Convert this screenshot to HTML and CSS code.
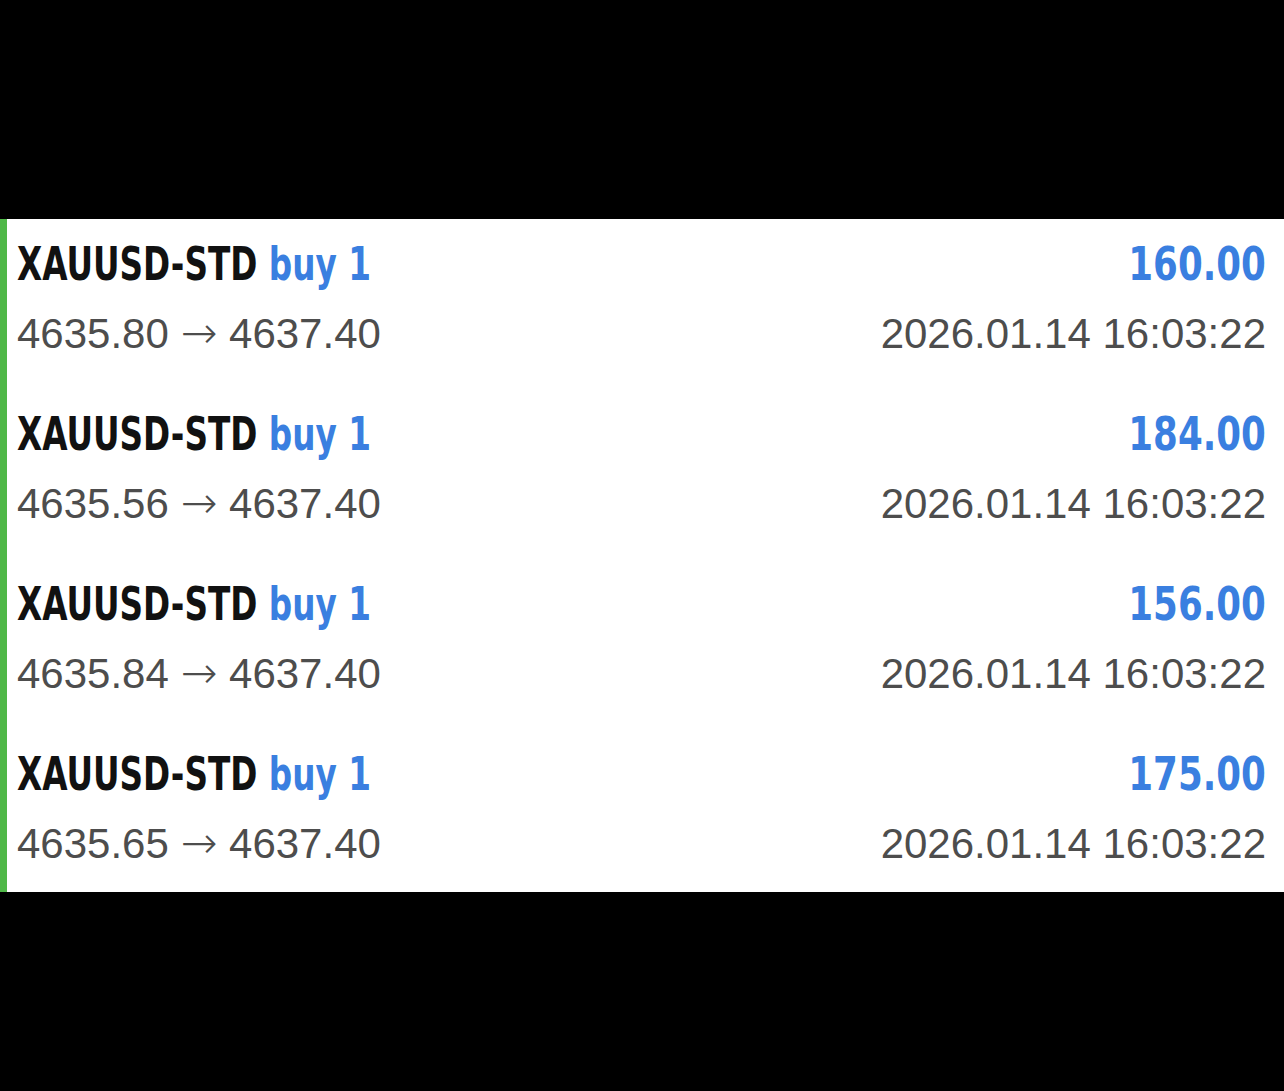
FILE: index.html
```html
<!DOCTYPE html>
<html>
	<head>
		<meta charset="utf-8">
		<title>Closed trades</title>
		<link rel="stylesheet" href="styles.css">
	</head>
	<body>
		<div class="list">
			<div class="row">
				<div class="line">
					<span class="sym">XAUUSD-STD <span class="side">buy 1</span></span>
					<span class="profit">160.00</span>
				</div>
				<div class="line sub">
					<span>4635.80 <span class="arrow">→</span> 4637.40</span>
					<span>2026.01.14 16:03:22</span>
				</div>
			</div>
			<div class="row">
				<div class="line">
					<span class="sym">XAUUSD-STD <span class="side">buy 1</span></span>
					<span class="profit">184.00</span>
				</div>
				<div class="line sub">
					<span>4635.56 <span class="arrow">→</span> 4637.40</span>
					<span>2026.01.14 16:03:22</span>
				</div>
			</div>
			<div class="row">
				<div class="line">
					<span class="sym">XAUUSD-STD <span class="side">buy 1</span></span>
					<span class="profit">156.00</span>
				</div>
				<div class="line sub">
					<span>4635.84 <span class="arrow">→</span> 4637.40</span>
					<span>2026.01.14 16:03:22</span>
				</div>
			</div>
			<div class="row">
				<div class="line">
					<span class="sym">XAUUSD-STD <span class="side">buy 1</span></span>
					<span class="profit">175.00</span>
				</div>
				<div class="line sub">
					<span>4635.65 <span class="arrow">→</span> 4637.40</span>
					<span>2026.01.14 16:03:22</span>
				</div>
			</div>
		</div>
	</body>
</html>
```

FILE: styles.css
```css
body, html{
	background-color: #000;
	margin: 0;
}
.list{
	margin-top: 219px;
	height: 673px;
	background-color: #fff;
	border-left: 7px solid #4fb848;
	box-sizing: border-box;
	padding: 12px 18px 0 10px;
}
.row{
	height: 170px;
}
.line{
	display: flex;
	justify-content: space-between;
	align-items: baseline;
}
.sym, .profit{
	display: inline-block;
	font-family: "DejaVu Sans Condensed", "DejaVu Sans", sans-serif;
	font-stretch: condensed;
	font-weight: 700;
	font-size: 46px;
	line-height: 66px;
}
.sym{
	color: #111;
	transform: scaleX(0.79);
	transform-origin: left;
}
.profit{
	color: #3a7fe0;
	transform: scaleX(0.86);
	transform-origin: right;
}
.side{
	color: #3a7fe0;
}
.sub{
	font-family: "Liberation Sans", Arial, sans-serif;
	font-size: 42px;
	color: #4d4d4d;
	line-height: 72px;
}
.arrow{
	font-family: "DejaVu Sans", sans-serif;
	font-size: 44px;
	font-weight: 200;
}
```
